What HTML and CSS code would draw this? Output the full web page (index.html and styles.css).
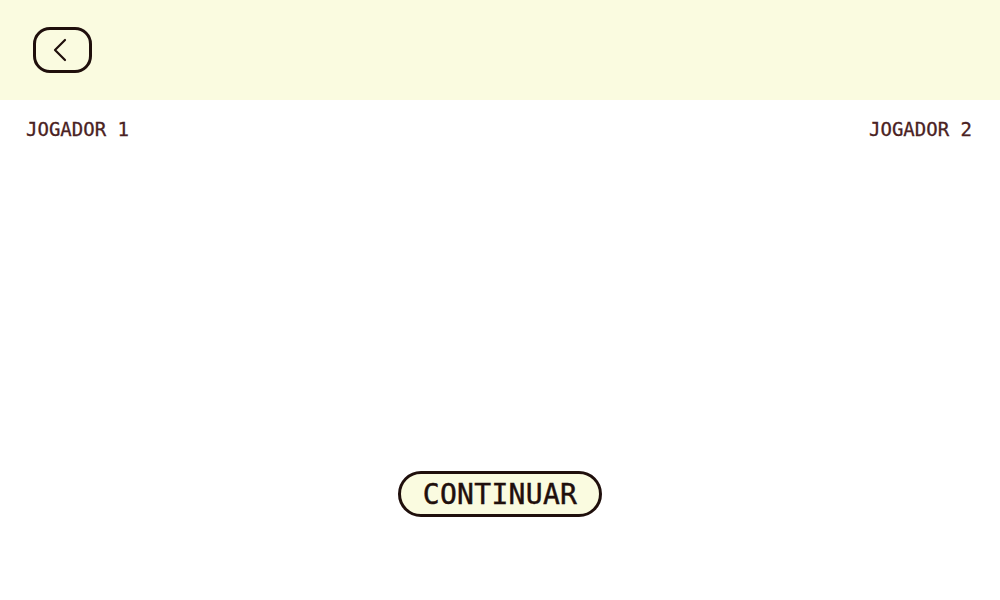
FILE: index.html
```html
<!DOCTYPE html>
<html>
<head>
<meta charset="utf-8">
<link rel="stylesheet" href="styles.css">
</head>
<body>
<header class="topbar">
  <button class="back-btn" aria-label="Voltar">
    <svg width="14" height="24" viewBox="0 0 14 24"><path d="M12 2 L2 12 L12 22" fill="none" stroke="#1f0f0c" stroke-width="2.2" stroke-linecap="round" stroke-linejoin="round"/></svg>
  </button>
</header>
<main class="content">
  <div class="players">
    <span class="player">JOGADOR 1</span>
    <span class="player">JOGADOR 2</span>
  </div>
  <div class="actions">
    <button class="continue-btn">CONTINUAR</button>
  </div>
</main>
</body>
</html>
```
FILE: styles.css
```css
html, body {
  margin: 0;
  padding: 0;
  background: #ffffff;
  font-family: "DejaVu Sans Mono", "Liberation Mono", monospace;
}
.topbar {
  height: 100px;
  background: #fafbe0;
  display: flex;
  align-items: center;
  padding-left: 33px;
  box-sizing: border-box;
}
.back-btn {
  width: 59px;
  height: 46px;
  border: 3px solid #1f0f0c;
  border-radius: 17px;
  background: transparent;
  display: flex;
  align-items: center;
  justify-content: center;
  padding: 0 6px 0 0;
  cursor: pointer;
}
.content {
  display: flex;
  flex-direction: column;
}
.players {
  display: flex;
  justify-content: space-between;
  padding: 18px 28px 0 26px;
}
.player {
  font-size: 19px;
  font-weight: normal;
  color: #4a2222;
  -webkit-text-stroke: 0.3px #4a2222;
}
.actions {
  display: flex;
  justify-content: center;
  padding-top: 331px;
}
.continue-btn {
  width: 204px;
  height: 46px;
  border: 3px solid #1f0f0c;
  border-radius: 23px;
  background: #fafbe0;
  font-family: "DejaVu Sans Mono", "Liberation Mono", monospace;
  font-size: 28px;
  font-weight: normal;
  color: #1f0f0c;
  -webkit-text-stroke: 0.45px #1f0f0c;
  padding: 0;
  letter-spacing: 0.3px;
  cursor: pointer;
}
```
